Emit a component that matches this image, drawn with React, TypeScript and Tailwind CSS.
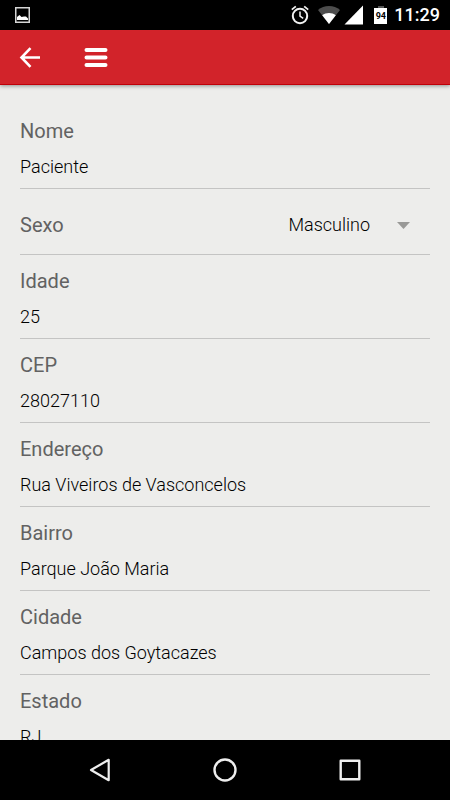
import { useState } from 'react';

const fieldsBefore = [{ id: 'nome', label: 'Nome', value: 'Paciente' }];

const fieldsAfter = [
  { id: 'idade', label: 'Idade', value: '25' },
  { id: 'cep', label: 'CEP', value: '28027110' },
  { id: 'endereco', label: 'Endereço', value: 'Rua Viveiros de Vasconcelos' },
  { id: 'bairro', label: 'Bairro', value: 'Parque João Maria' },
  { id: 'cidade', label: 'Cidade', value: 'Campos dos Goytacazes' },
  { id: 'estado', label: 'Estado', value: 'RJ' },
];

function StatusBar() {
  return (
    <div className="flex h-[30px] shrink-0 items-center bg-black pl-[15px] pr-[10px] text-white">
      <svg width="15" height="16" viewBox="0 0 15 16">
        <rect x="0.75" y="0.75" width="13.5" height="14.5" fill="none" stroke="#d6d6d6" strokeWidth="1.5" />
        <path d="M2 13V10L4.5 8L6.5 10L9 9.5L11 9.5L13 11.5V13Z" fill="#fff" />
      </svg>

      <div className="ml-auto flex items-center">
        {/* Alarm */}
        <svg className="mr-[9px]" width="18" height="20" viewBox="0 0 18 20" fill="none" stroke="#f2f2f2">
          <circle cx="9" cy="11" r="7.2" strokeWidth="2" />
          <path d="M9 6.5V11.2L12.2 13.4" strokeWidth="1.5" />
          <path d="M0.8 4.6L4.8 1.4M17.2 4.6L13.2 1.4" strokeWidth="1.8" />
        </svg>
        {/* Wifi */}
        <svg className="mr-[4px]" width="22" height="18" viewBox="0 0 22 18">
          <path d="M11 18L0 4C3 1.5 6.8 0 11 0C15.2 0 19 1.5 22 4Z" fill="#4d4d4d" />
          <path d="M11 18L4.2 9.2C6.2 7.6 8.5 6.9 11 6.9C13.5 6.9 15.8 7.6 17.8 9.2Z" fill="#fff" />
        </svg>
        {/* Signal */}
        <svg className="mr-[10px]" width="20" height="20" viewBox="0 0 20 20">
          <path d="M0.5 19.5L19 0.5V19.5Z" fill="#fff" />
        </svg>
        {/* Battery */}
        <div className="mr-[7px] flex flex-col items-center">
          <div className="h-[2px] w-[6px] bg-[#555555]" />
          <div className="flex h-4 w-[13px] items-center justify-center bg-white text-[9px] leading-none font-bold text-black">
            94
          </div>
        </div>
        <span className="text-[18px] leading-6 font-medium">11:29</span>
      </div>
    </div>
  );
}

function Header() {
  return (
    <header className="z-10 flex h-[55px] shrink-0 items-center gap-[42px] border-b border-[#c00008] bg-[#d2232a] px-[18px] shadow-[0_1px_4px_rgba(0,0,0,0.4)]">
      <button aria-label="Voltar">
        <svg width="24" height="24" viewBox="0 0 24 24" fill="none" stroke="#fff" strokeWidth="2.6">
          <path d="M22 12.5H4M12.5 3.2L3.5 12.5L12.5 21.8" />
        </svg>
      </button>
      <button aria-label="Menu">
        <svg width="24" height="24" viewBox="0 0 24 24" stroke="#fff" strokeWidth="4" strokeLinecap="round">
          <path d="M2.5 5H21.5M2.5 12.5H21.5M2.5 20H21.5" />
        </svg>
      </button>
    </header>
  );
}

function Field({ id, label, value }: { id: string; label: string; value: string }) {
  return (
    <div className="flex flex-col gap-3 border-b border-[#c4c4c3] pt-[14px] pb-[9px]">
      <label htmlFor={id} className="text-[20px] leading-6 text-[#626262]">
        {label}
      </label>
      <input id={id} defaultValue={value} className="h-6 w-full text-[18px] leading-6 font-light text-black outline-none" />
    </div>
  );
}

export default function App() {
  const [sexo, setSexo] = useState('Masculino');

  return (
    <div className="flex h-screen flex-col bg-[#ededeb] font-['Roboto',sans-serif]">
      <StatusBar />
      <Header />

      <main className="min-h-0 flex-1 overflow-y-auto px-5 pt-5 [scrollbar-width:none]">
        <form>
          {fieldsBefore.map((f) => (
            <Field key={f.id} {...f} />
          ))}

          <div className="relative flex h-[66px] items-center justify-between border-b border-[#c4c4c3] pt-[6px]">
            <label htmlFor="sexo" className="text-[20px] leading-6 text-[#626262]">
              Sexo
            </label>
            <select
              id="sexo"
              value={sexo}
              onChange={(e) => setSexo(e.target.value)}
              className="appearance-none bg-transparent pr-[60px] text-[18px] leading-6 font-light text-black outline-none [field-sizing:content]"
            >
              <option>Masculino</option>
              <option>Feminino</option>
            </select>
            <svg className="pointer-events-none absolute top-[33px] right-5" width="13" height="7" viewBox="0 0 13 7">
              <path d="M0 0H13L6.5 7Z" fill="#999997" />
            </svg>
          </div>

          {fieldsAfter.map((f) => (
            <Field key={f.id} {...f} />
          ))}
        </form>
      </main>

      <nav className="flex h-[60px] shrink-0 justify-center bg-black">
        <button aria-label="Voltar" className="flex w-[125px] items-center justify-center">
          <svg width="24" height="26" viewBox="0 0 24 26" fill="none" stroke="#eee" strokeWidth="2.2" strokeLinejoin="round">
            <path d="M20.7 2.8V23.2L3 13Z" />
          </svg>
        </button>
        <button aria-label="Início" className="flex w-[125px] items-center justify-center">
          <svg width="24" height="24" viewBox="0 0 24 24" fill="none" stroke="#eee" strokeWidth="2.4">
            <circle cx="12" cy="12" r="10.5" />
          </svg>
        </button>
        <button aria-label="Recentes" className="flex w-[125px] items-center justify-center">
          <svg width="24" height="24" viewBox="0 0 24 24" fill="none" stroke="#eee" strokeWidth="2.4" strokeLinejoin="round">
            <rect x="2.7" y="2.7" width="18.6" height="18.6" />
          </svg>
        </button>
      </nav>
    </div>
  );
}
